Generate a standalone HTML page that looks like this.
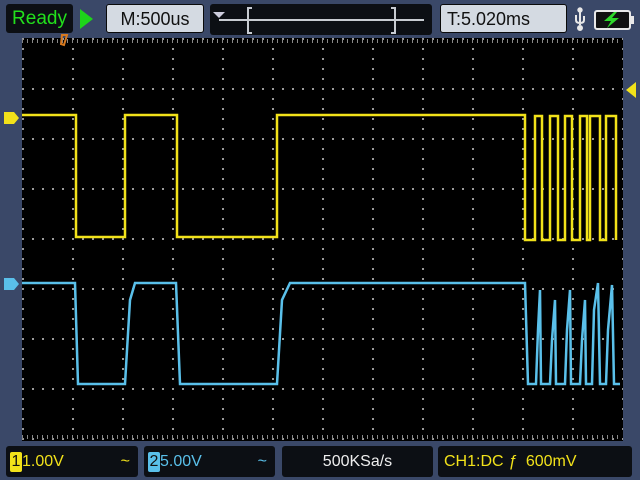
<!DOCTYPE html>
<html><head><meta charset="utf-8"><style>
body{margin:0;width:640px;height:480px;background:#3a4868;overflow:hidden;position:relative;font-family:"Liberation Sans",sans-serif}
.b{position:absolute;border-radius:3px}
</style></head><body>
<div class="b" style="left:6px;top:4px;width:67px;height:29px;background:#0c0f14;color:#22e01c;font-size:19px;line-height:29px;text-align:center">Ready</div>
<div style="position:absolute;left:80px;top:9px;width:0;height:0;border-left:13px solid #1ed41a;border-top:10px solid transparent;border-bottom:10px solid transparent"></div>
<div class="b" style="left:106px;top:4px;width:98px;height:29px;background:#d4dae2;color:#111;font-size:18px;line-height:29px;text-align:center;border:1px solid #0a0a0a;box-sizing:border-box">M:500us</div>
<div class="b" style="left:210px;top:4px;width:222px;height:31px;background:#0c0f14"></div>
<svg style="position:absolute;left:0;top:0" width="640" height="40">
<polygon points="213,12 225,12 219,18" fill="#ccd"/>
<line x1="219" y1="20" x2="424" y2="20" stroke="#c8ccd2" stroke-width="2"/>
<path d="M252,8 h-4 v25 h4 M391,8 h4 v25 h-4" stroke="#c8ccd2" stroke-width="2" fill="none"/>
<g fill="#e8e8e8" stroke="#e8e8e8"><path d="M580,25 v-14 M576,15 v5 q0,3 4,3 q4,0 4,-3 v-4" fill="none" stroke-width="2"/><circle cx="580" cy="10" r="2.2"/><circle cx="580" cy="28" r="2.5"/></g>
<rect x="595" y="11" width="35" height="18" rx="2" fill="#111" stroke="#e8e8e8" stroke-width="2"/>
<rect x="630" y="16" width="4" height="8" fill="#e8e8e8"/>
<polygon points="614,12 604,21 611,21 607,28 619,18 612,18 617,12" fill="#2ed82a"/>
</svg>
<div class="b" style="left:440px;top:4px;width:127px;height:29px;background:#d4dae2;color:#111;font-size:18px;line-height:29px;padding-left:6px;box-sizing:border-box;border:1px solid #0a0a0a">T:5.020ms</div>

<svg style="position:absolute;left:0;top:0" width="640" height="480">
<defs>
<pattern id="dh" x="22" y="38" width="10" height="50" patternUnits="userSpaceOnUse"><rect x="0" y="0" width="2" height="2" fill="#9a9a9a"/></pattern>
<pattern id="dv" x="22" y="38" width="50" height="10" patternUnits="userSpaceOnUse"><rect x="0" y="0" width="2" height="2" fill="#9a9a9a"/></pattern>
</defs>
<rect x="22" y="38" width="601" height="403" fill="#000"/>
<rect x="22" y="38" width="601" height="403" fill="url(#dh)"/>
<rect x="22" y="38" width="601" height="403" fill="url(#dv)"/>
<path d="M22,41 H622 M22,437 H622" stroke="#888" stroke-width="4" stroke-dasharray="1 4"/>
<path d="M62,35 l5,0 -3,10 -3,-1 z" fill="none" stroke="#d87a20" stroke-width="2"/>
<polygon points="4,112 14,112 19,118 14,124 4,124" fill="#f2e21a"/>
<polygon points="4,278 14,278 19,284 14,290 4,290" fill="#5ac0ea"/>
<polygon points="636,82 626,90 636,98" fill="#f2e21a"/>
<path fill="none" stroke="#f2e21a" stroke-width="2.5" d="M22,115 H76 V237 H125 V115 H177 V237 H277 V115 H525 V240 H535 V116 H542 V240 H550 V116 H558 V240 H565 V116 H572 V240 H580 V116 H587 V240 H590 V116 H600 V240 H606 V116 H616 V240"/>
<path fill="none" stroke="#5ac0ea" stroke-width="2.5" d="M22,283 H75 L78,384 H125 L130,300 L135,283 H176 L180,384 H277 L282,300 L290,283 H525 L528,384 H536 L538,330 L540,290 L541,384 H550 L552,340 L555,300 L556,384 H565 L567,330 L570,290 L571,384 H580 L582,340 L585,300 L586,384 H592 L594,310 L598,283 L600,384 H606 L608,330 L612,285 L614,384 H620"/>
</svg>

<div class="b" style="left:6px;top:446px;width:132px;height:31px;background:#0c0f14;color:#f2e21a;font-size:16px;line-height:31px">
<span style="display:inline-block;background:#f2e21a;color:#111;width:12px;text-align:center;border-radius:2px;margin-left:4px;line-height:20px">1</span>1.00V<span style="position:absolute;right:8px">~</span></div>
<div class="b" style="left:144px;top:446px;width:131px;height:31px;background:#0c0f14;color:#5ac0ea;font-size:16px;line-height:31px">
<span style="display:inline-block;background:#5ac0ea;color:#111;width:12px;text-align:center;border-radius:2px;margin-left:4px;line-height:20px">2</span>5.00V<span style="position:absolute;right:8px">~</span></div>
<div class="b" style="left:282px;top:446px;width:151px;height:31px;background:#0c0f14;color:#eee;font-size:16px;line-height:31px;text-align:center">500KSa/s</div>
<div class="b" style="left:438px;top:446px;width:194px;height:31px;background:#0c0f14;color:#f2e21a;font-size:16px;line-height:31px;padding-left:6px;box-sizing:border-box">CH1:DC <span style="font-style:italic">ƒ</span>&nbsp; 600mV</div>
</body></html>
